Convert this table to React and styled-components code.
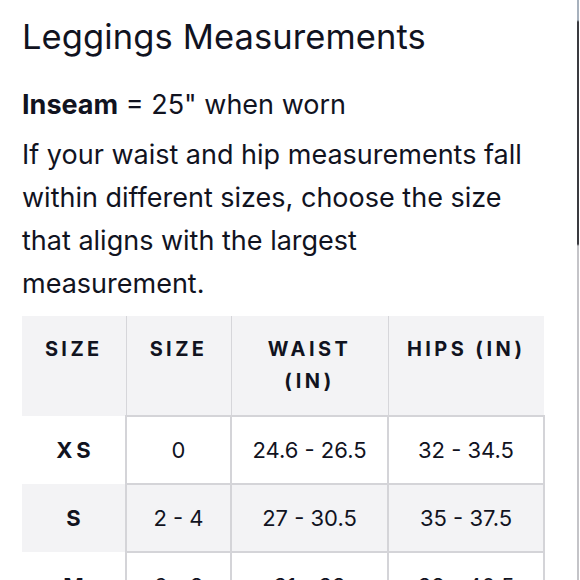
import React from "react";
import styled, { createGlobalStyle } from "styled-components";

const Global = createGlobalStyle`
  html, body { margin: 0; padding: 0; background: #fff; }
  body { font-family: Inter, "Noto Sans", sans-serif; color: #11131f; overflow: hidden; }
`;

const Page = styled.div`
  width: 580px;
  height: 580px;
  box-sizing: border-box;
  padding: 16px 36px 0 22px;
  overflow: hidden;
  position: relative;
`;

const Title = styled.h1`
  margin: 0;
  font-size: 34.5px;
  font-weight: 400;
  line-height: 42px;
  letter-spacing: 0.1px;
`;

const Lead = styled.p`
  margin: 29px 0 0;
  font-size: 27px;
  line-height: 36px;
  b { font-weight: 700; }
`;

const Body = styled.p`
  margin: 10px 0 0;
  font-size: 27px;
  line-height: 43px;
`;

const Table = styled.table`
  margin-top: 11px;
  width: 522px;
  border-collapse: collapse;
  table-layout: fixed;
`;

const Head = styled.th`
  background: #f3f3f5;
  font-size: 20px;
  font-weight: 700;
  letter-spacing: 3.4px;
  line-height: 32px;
  vertical-align: top;
  padding: 17px 14px 18px;
  text-align: center;
  border-left: ${(p) => (p.$first ? "none" : "1px solid #d6d6da")};
`;

const Row = styled.tr`
  background: ${(p) => (p.$shade ? "#f3f3f5" : "#fff")};
`;

const RowHead = styled.th`
  font-size: 22px;
  font-weight: 700;
  letter-spacing: 4px;
  height: 66px;
  padding: 0 0 0 4px;
  text-align: center;
  border: none;
`;

const Cell = styled.td`
  font-size: 22px;
  font-weight: 400;
  text-align: center;
  padding: 0;
  height: 66px;
  border: 2.5px solid #d4d4d8;
`;

const Scroll = styled.div`
  position: absolute;
  right: 1px;
  top: 0;
  width: 2px;
  height: 580px;
  background: linear-gradient(#a7b1bd 0, #a7b1bd 20px, #3a3b40 22px, #3a3b40 244px, #c4c4c8 246px, #c4c4c8 100%);
`;

const rows = [
  ["XS", "0", "24.6 - 26.5", "32 - 34.5"],
  ["S", "2 - 4", "27 - 30.5", "35 - 37.5"],
  ["M", "6 - 8", "31 - 33", "38 - 40.5"],
];

export default function App() {
  return (
    <>
      <Global />
      <Page>
        <Title>Leggings Measurements</Title>
        <Lead>
          <b>Inseam</b> = 25" when worn
        </Lead>
        <Body>
          If your waist and hip measurements fall within different sizes, choose the size that aligns with the largest measurement.
        </Body>
        <Table>
          <colgroup>
            <col style={{ width: 104 }} />
            <col style={{ width: 105 }} />
            <col style={{ width: 157 }} />
            <col style={{ width: 156 }} />
          </colgroup>
          <thead>
            <tr>
              <Head $first>SIZE</Head>
              <Head>SIZE</Head>
              <Head>WAIST (IN)</Head>
              <Head>HIPS (IN)</Head>
            </tr>
          </thead>
          <tbody>
            {rows.map((r, i) => (
              <Row key={r[0]} $shade={i % 2 === 1}>
                <RowHead>{r[0]}</RowHead>
                <Cell>{r[1]}</Cell>
                <Cell>{r[2]}</Cell>
                <Cell>{r[3]}</Cell>
              </Row>
            ))}
          </tbody>
        </Table>
        <Scroll />
      </Page>
    </>
  );
}
